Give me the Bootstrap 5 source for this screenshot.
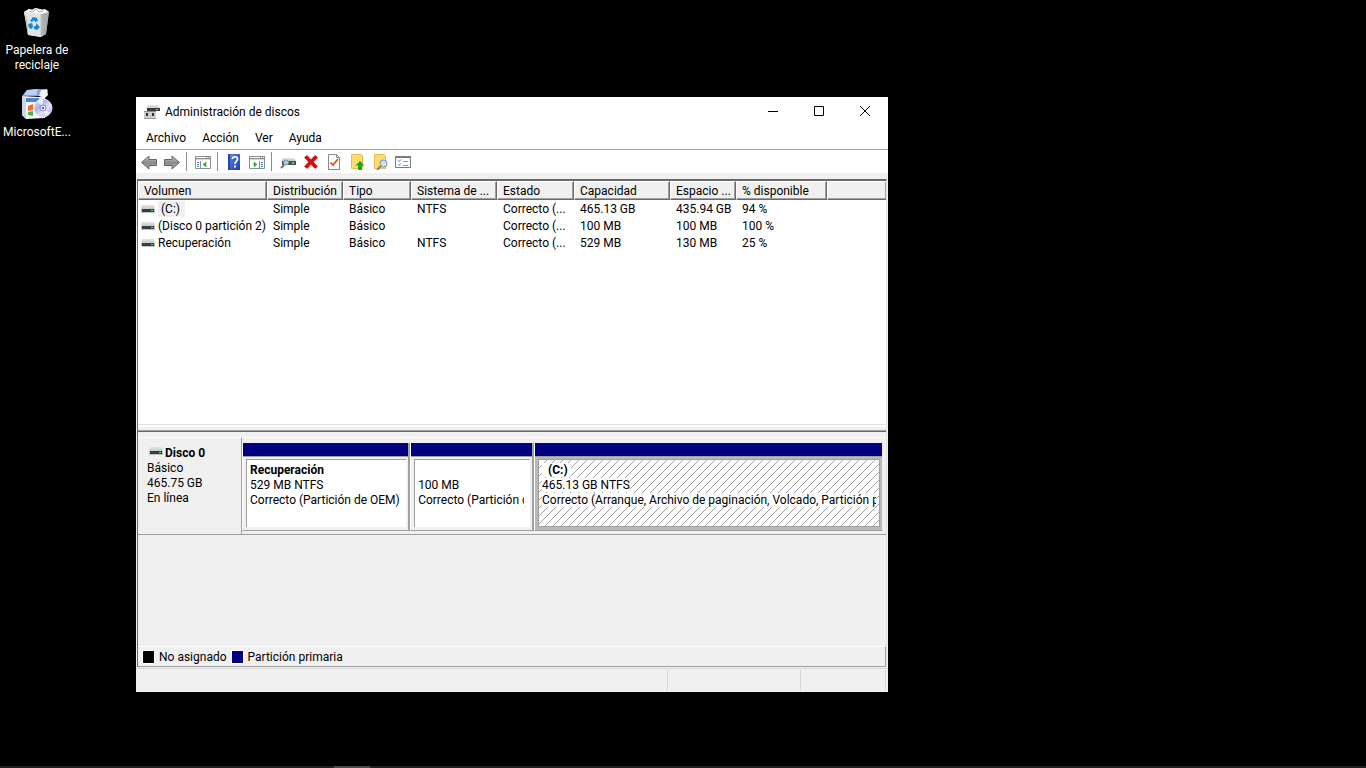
<!DOCTYPE html>
<html lang="es">
<head>
<meta charset="utf-8">
<meta name="viewport" content="width=device-width, initial-scale=1">
<title>Administración de discos</title>
<link href="https://cdn.jsdelivr.net/npm/bootstrap@5.3.0/dist/css/bootstrap.min.css" rel="stylesheet">
<style>
  :root { --face: #f0f0f0; --line: #a0a0a0; --dark: #696969; --navy: #000080; }
  body { background: #000; color: #000; font: 12px/15px Roboto, "Open Sans", sans-serif; }
  .desktop { min-height: 100vh; overflow: hidden; }
  .shortcuts { width: 74px; padding-top: 6px; gap: 15px; }
  .shortcut { color: #fff; line-height: 15px; }
  .shortcut svg { margin-bottom: 5px; }
  .app-window { left: 136px; right: 478px; top: 97px; bottom: 76px; background: var(--face); }
  .title-row { height: 30px; padding-left: 8px; gap: 5px; }
  .win-btn { width: 46px; height: 28px; }
  .plain-btn { border: 0; padding: 0; background: transparent; color: #000; line-height: 0; }
  .menu-row { height: 23px; padding: 1px 2px 0; border-bottom: 1px solid var(--line); }
  .menu-row button { padding: 0 8px; line-height: 15px; }
  .tool-row { height: 23px; padding-left: 1px; }
  .tool-row button { width: 23px; height: 22px; }
  .tool-sep { width: 1px; height: 19px; margin: 0 4px 0 3px; background: #8d8d8d; }
  .panes { margin: 6px 1px 0; border: 1px solid var(--dark); border-width: 2px 1px 0 1px; border-right-color: #e3e3e3; }
  .list-pane { flex: 243 1 0; background: #fff; }
  .vol-table { table-layout: fixed; width: 100%; border-collapse: separate; border-spacing: 0; }
  .vol-table th { height: 19px; padding: 2px 0 0 5px; font-weight: 400; background: var(--face); border: 1px solid #fff; border-right-color: var(--dark); border-bottom-color: var(--dark); box-shadow: inset -1px -1px var(--line); line-height: 15px; }
  .vol-table td { height: 17px; padding: 2px 0 0 6px; line-height: 15px; }
  .vol-table th, .vol-table td { overflow: hidden; white-space: nowrap; }
  .vol-table td:first-child { padding-left: 3px; }
  .vol-table td svg { margin: 0 3px 2px 0; vertical-align: middle; }
  .vol-name.picked { background: var(--face); padding: 1px 5px 1px 3px; }
  .splitter { height: 8px; background: var(--face); border-top: 1px solid #e3e3e3; border-bottom: 1px solid var(--dark); box-shadow: inset 0 -1px var(--line), inset 0 2px #fff; }
  .disk-row { margin-top: 5px; height: 98px; }
  .disk-info { width: 104px; padding: 8px 0 0 9px; border-top: 1px solid #fff; border-right: 1px solid var(--line); border-bottom: 1px solid var(--line); }
  .disk-name { gap: 2px; padding-left: 2px; }
  .disk-name svg { margin-top: 1px; }
  .disk-map { min-width: 0; border-top: 1px solid #fff; border-bottom: 1px solid var(--line); padding: 5px 3px 3px 0; }
  .disk-space { flex: 111 1 0; }
  .part { border-right: 2px solid var(--line); border-left: 1px solid #fff; border-bottom: 1px solid var(--line); min-width: 0; }
  .part-a { flex: 168 1 0; } .part-b { flex: 123 1 0; } .part-c { flex: 353 1 0; }
  .part-bar { height: 13px; background: var(--navy); }
  .part-body { border-top: 1px solid var(--line); padding: 2px 2px 3px 3px; min-height: 0; }
  .part-box { background-color: #fff; border-top: 1px solid var(--line); border-left: 1px solid var(--line); padding: 3px 6px 0 3px; }
  .part-c { border-right: 1px solid var(--face); }
  .part-c .part-body { background: #b8b8b8; }
  .part-c .part-box { border: 1px solid var(--line); background-image: url("data:image/svg+xml,%3Csvg xmlns='http://www.w3.org/2000/svg' width='8' height='8' shape-rendering='crispEdges'%3E%3Cpath fill='%23a0a0a0' d='M7 0h1v1h-1zM6 1h1v1h-1zM5 2h1v1h-1zM4 3h1v1h-1zM3 4h1v1h-1zM2 5h1v1h-1zM1 6h1v1h-1zM0 7h1v1h-1z'/%3E%3C/svg%3E"); padding-right: 3px; }
  .part-line { height: 15px; overflow: hidden; white-space: nowrap; }
  .part-c .part-line span { background: #fff; }
  .part-c .drive-letter { padding: 0 3px 0 6px; }
  .legend-row { height: 21px; padding-left: 5px; gap: 5px; border: 1px solid var(--line); border-top-color: #fff; border-left: 0; }
  .legend-row span { padding-top: 1px; }
  .swatch { width: 11px; height: 12px; outline: 1px solid #fff; }
  .swatch-primary { background: var(--navy); }
  .status-row { height: 24px; margin-top: 1px; border-top: 1px solid #d7d7d7; padding: 1px 2px 1px 0; }
  .status-row div { border-right: 1px solid #d7d7d7; }
  .status-mid { width: 133px; } .status-end { width: 85px; }
  .task-strip { height: 2px; background: #231f20; }
  .task-active { width: 36px; margin-left: 334px; height: 2px; background: #4c4a4a; }
</style>
</head>
<body>
<svg width="0" height="0" class="position-absolute" aria-hidden="true">
  <defs>
    <linearGradient id="lid" x1="0" y1="0" x2="0" y2="1"><stop offset="0" stop-color="#e2e4e6"/><stop offset="1" stop-color="#c6c9cc"/></linearGradient>
    <linearGradient id="bin" x1="0" y1="0" x2="1" y2="0"><stop offset="0" stop-color="#f3f5f6"/><stop offset=".65" stop-color="#d9dde0"/><stop offset="1" stop-color="#a9adb0"/></linearGradient>
    <linearGradient id="arr" x1="0" y1="0" x2="0" y2="1"><stop offset="0" stop-color="#cfcfcf"/><stop offset=".5" stop-color="#8b8b8b"/><stop offset="1" stop-color="#aaa"/></linearGradient>
    <linearGradient id="book" x1="0" y1="0" x2="1" y2="1"><stop offset="0" stop-color="#5d86e0"/><stop offset="1" stop-color="#1d3fae"/></linearGradient>
    <linearGradient id="disc" x1="0" y1="0" x2="1" y2="1"><stop offset="0" stop-color="#eef0ff"/><stop offset=".35" stop-color="#a9b2ec"/><stop offset=".6" stop-color="#e4e2fa"/><stop offset="1" stop-color="#8d98de"/></linearGradient>
    <symbol id="drive" viewBox="0 0 14 8"><path d="M1 0h12l1 4H0z" fill="url(#lid)"/><path d="M0 4h14v4H0z" fill="#c0c3c5"/><path d="M1 4h12v3H1z" fill="#3a3d3f"/><path d="M10 5h2v1h-2z" fill="#3f3"/></symbol>
  </defs>
</svg>
<div class="desktop position-relative d-flex flex-column">
  <nav class="shortcuts d-flex flex-column flex-grow-1" aria-label="Escritorio">
    <a href="#" class="shortcut text-center text-decoration-none d-block">
      <svg class="d-block mx-auto" width="32" height="32" viewBox="0 0 32 32"><path d="M3 6l5-3 3 1 3-2 5 1 4 1 5 2-3 22-5 3-12-2z" fill="url(#bin)"/><path d="M3 6l17 2 8-2-3 22-5 3z" fill="#9fa4a8" opacity=".7"/><path d="M3 6l17 2v23L7 29z" fill="#dfe3e6"/><path d="M3 6l5-3 4 1 3-2 5 2 4-1 4 3-8 2z" fill="#fafbfb"/><path d="M8 5l4 1 3-3 3 3 4-1" fill="none" stroke="#a5aaad"/><path d="M5 10l2 18M20 8v22" stroke="#bcc1c4" fill="none"/><g fill="#1b86d2"><path d="M9 15l3-4 4 1 1 3-3 1-1-2-2 2z"/><path d="M7 18l4-1 1 3-1 3-3-1z"/><path d="M13 23v-3h2v-3l4 4-3 3z"/></g></svg>
      Papelera de reciclaje
    </a>
    <a href="#" class="shortcut text-center text-decoration-none d-block">
      <svg class="d-block mx-auto" width="32" height="32" viewBox="0 0 32 32"><path d="M1 8l5-6 13-1 8 1-3 6z" fill="#7fa6e8"/><path d="M6 2l11-1-2 6H3z" fill="#b9d2f8"/><path d="M20 2l6-1 1 6-3 3-6-2z" fill="#f5f6fa"/><path d="M1 8l17 1 6-1v22l-19 1-4-4z" fill="#f4f7fb"/><path d="M5 10h13v4H5z" fill="#4b86dc"/><path d="M1 8l4 2v21l-4-4z" fill="#cbd5e6"/><path d="M7 18l5-2v6l-5 1z" fill="#f36f27"/><path d="M7 24l5-1v5l-5-1z" fill="#4fb445"/><circle cx="22" cy="20" r="9" fill="url(#disc)" stroke="#dfe2f6"/><path d="M22 20l-6-7 6-2zM22 20l7 5-5 4z" fill="#fff" opacity=".65"/><circle cx="22" cy="20" r="3" fill="#eef" stroke="#7b86ca"/><circle cx="22" cy="20" r="1" fill="#334"/></svg>
      MicrosoftE...
    </a>
  </nav>
  <footer class="task-strip"><div class="task-active"></div></footer>

  <main class="app-window position-absolute d-flex flex-column">
    <header class="bg-white">
      <div class="title-row d-flex align-items-center">
        <svg width="16" height="16" viewBox="0 0 16 16"><path d="M4 1h10l2 4H2z" fill="url(#lid)"/><path d="M3 4h13v3H3z" fill="#3a3d3f"/><path d="M12 5h2v1h-2z" fill="#3f3"/><path d="M0 7h12v8H0z" fill="#c9cccf"/><path d="M0 7h12v1H0z" fill="#8b8e90"/><path d="M2 9h2v3H2zM8 9h2v3H8z" fill="#333"/><path d="M0 14h12v1H0z" fill="#999"/></svg>
        <span class="flex-grow-1">Administración de discos</span>
        <div class="d-flex align-self-start">
          <button class="plain-btn win-btn" aria-label="Minimizar"><svg width="10" height="10"><path d="M0 5.5h10" stroke="#000"/></svg></button>
          <button class="plain-btn win-btn" aria-label="Maximizar"><svg width="10" height="10"><path d="M.5.5h9v9h-9z" fill="none" stroke="#000"/></svg></button>
          <button class="plain-btn win-btn" aria-label="Cerrar"><svg width="10" height="10"><path d="M0 0l10 10M10 0L0 10" stroke="#000"/></svg></button>
        </div>
      </div>
      <nav class="menu-row d-flex align-items-center" aria-label="Menú">
        <button class="plain-btn">Archivo</button><button class="plain-btn">Acción</button><button class="plain-btn">Ver</button><button class="plain-btn">Ayuda</button>
      </nav>
      <div class="tool-row d-flex align-items-center" role="toolbar" aria-label="Herramientas">
        <button class="plain-btn" aria-label="Atrás"><svg width="16" height="16" viewBox="0 0 16 16"><path d="M.5 8.500L8 2v3.500h7.500v6H8V15z" fill="url(#arr)" stroke="#666"/></svg></button>
        <button class="plain-btn" aria-label="Adelante"><svg width="16" height="16" viewBox="0 0 16 16"><path d="M15.500 8.500L8 2v3.500H.5v6H8V15z" fill="url(#arr)" stroke="#666"/></svg></button>
        <span class="tool-sep"></span>
        <button class="plain-btn" aria-label="Mostrar u ocultar árbol"><svg width="16" height="16" viewBox="0 0 16 16"><path d="M.5 2.500h15v12H.5z" fill="#fff" stroke="#8a8f94"/><path d="M0 2h16v4H0z" fill="#8a8f94"/><path d="M1 3h10v1H1zM12 3h1v1h-1zM14 3h1v1h-1z" fill="#fff"/><path d="M1 5h14v1H1z" fill="#d4d7da"/><path d="M5.500 7v8" stroke="#8a8f94"/><path d="M2 8h2v1H2zM2 10h2v1H2zM2 12h2v1H2z" fill="#3d7ec0"/><path d="M8 10.500L11 8v5z" fill="#2daa1c" stroke="#2daa1c" stroke-width=".5"/></svg></button>
        <span class="tool-sep"></span>
        <button class="plain-btn" aria-label="Ayuda"><svg width="16" height="16" viewBox="0 0 16 16"><path d="M2 0h12v16H2z" fill="url(#book)"/><path d="M2 0h2v16H2z" fill="#2546a6"/><path d="M6.500 5c0-3 5-3 5 0 0 2-2.500 2.200-2.500 5" fill="none" stroke="#fff" stroke-width="1.700"/><path d="M8 11.500h2v2H8z" fill="#fff"/></svg></button>
        <button class="plain-btn" aria-label="Panel de acciones"><svg width="16" height="16" viewBox="0 0 16 16"><path d="M.5 2.500h15v12H.5z" fill="#fff" stroke="#8a8f94"/><path d="M0 2h16v4H0z" fill="#8a8f94"/><path d="M1 3h10v1H1zM12 3h1v1h-1zM14 3h1v1h-1z" fill="#fff"/><path d="M1 5h14v1H1z" fill="#d4d7da"/><path d="M10.500 7v8" stroke="#8a8f94"/><path d="M12 8h2v1h-2zM12 10h2v1h-2zM12 12h2v1h-2z" fill="#3d7ec0"/><path d="M8 10.500L5 8v5z" fill="#2daa1c" stroke="#2daa1c" stroke-width=".5"/></svg></button>
        <span class="tool-sep"></span>
        <button class="plain-btn" aria-label="Volver a examinar discos"><svg width="16" height="16" viewBox="0 0 16 16"><path d="M3 4h11l2 3H1z" fill="url(#lid)"/><path d="M2 7h14v4H2z" fill="#4a4e51"/><path d="M12 8h2v2h-2z" fill="#3e3"/><circle cx="6" cy="8.500" r="2.500" fill="#a9cbe6" stroke="#7794a8"/><path d="M4 11l-3 3" stroke="#67747c" stroke-width="2"/></svg></button>
        <button class="plain-btn" aria-label="Eliminar"><svg width="16" height="16" viewBox="0 0 16 16"><path d="M1.500 3.500l2.500-2 4 4.200 4-4.200 2.500 2L10.300 8l4.200 4.500-2.500 2-4-4.200-4 4.200-2.500-2L5.700 8z" fill="#dc0a0a" stroke="#a60000" stroke-width=".6"/></svg></button>
        <button class="plain-btn" aria-label="Propiedades"><svg width="16" height="16" viewBox="0 0 16 16"><path d="M2.500.5h8l3 3v12h-11z" fill="#fafafa" stroke="#898989"/><path d="M10.500.5v3h3" fill="none" stroke="#898989"/><path d="M4.500 8.500L7 11l5-6" fill="none" stroke="#e54a19" stroke-width="1.700"/></svg></button>
        <button class="plain-btn" aria-label="Subir"><svg width="16" height="16" viewBox="0 0 16 16"><path d="M2.500.5h10l1 1v13h-11z" fill="#fbdc72" stroke="#e6bf4b"/><path d="M11 7l4.500 4.500H13V16H9v-4.500H6.500z" fill="#23a51a"/></svg></button>
        <button class="plain-btn" aria-label="Explorar"><svg width="16" height="16" viewBox="0 0 16 16"><path d="M2.500.5h10l1 1v13h-11z" fill="#fbdc72" stroke="#e6bf4b"/><path d="M9 12l-4 4" stroke="#78848c" stroke-width="2"/><circle cx="11.500" cy="9.500" r="3.500" fill="#c5e2f6" stroke="#7593aa"/></svg></button>
        <button class="plain-btn" aria-label="Vista de lista"><svg width="16" height="16" viewBox="0 0 16 16"><path d="M.5 2.500h15v11H.5z" fill="#fff" stroke="#777c80"/><path d="M0 2h16v2H0z" fill="#777c80"/><path d="M3 6.500l1 1 2-2M3 10.500l1 1 2-2" fill="none" stroke="#2d7ed1"/><path d="M8 7h5v1H8zM8 11h5v1H8z" fill="#999"/></svg></button>
      </div>
    </header>

    <div class="panes d-flex flex-column flex-grow-1">
      <section class="list-pane">
        <table class="vol-table">
          <colgroup><col style="width:129px"><col style="width:76px"><col style="width:68px"><col style="width:86px"><col style="width:77px"><col style="width:96px"><col style="width:66px"><col style="width:91px"><col></colgroup>
          <thead><tr><th>Volumen</th><th>Distribución</th><th>Tipo</th><th>Sistema de ...</th><th>Estado</th><th>Capacidad</th><th>Espacio ...</th><th>% disponible</th><th class="border-end-0"></th></tr></thead>
          <tbody>
            <tr><td><svg width="14" height="8"><use href="#drive"/></svg><span class="vol-name picked">(C:)</span></td><td>Simple</td><td>Básico</td><td>NTFS</td><td>Correcto (...</td><td>465.13 GB</td><td>435.94 GB</td><td>94 %</td><td></td></tr>
            <tr><td><svg width="14" height="8"><use href="#drive"/></svg><span class="vol-name">(Disco 0 partición 2)</span></td><td>Simple</td><td>Básico</td><td></td><td>Correcto (...</td><td>100 MB</td><td>100 MB</td><td>100 %</td><td></td></tr>
            <tr><td><svg width="14" height="8"><use href="#drive"/></svg><span class="vol-name">Recuperación</span></td><td>Simple</td><td>Básico</td><td>NTFS</td><td>Correcto (...</td><td>529 MB</td><td>130 MB</td><td>25 %</td><td></td></tr>
          </tbody>
        </table>
      </section>
      <div class="splitter"></div>
      <section class="disk-row d-flex">
        <div class="disk-info flex-shrink-0">
          <div class="disk-name fw-bold d-flex"><svg width="14" height="8"><use href="#drive"/></svg>Disco 0</div>
          <div>Básico</div><div>465.75 GB</div><div>En línea</div>
        </div>
        <div class="disk-map d-flex flex-grow-1">
          <div class="part part-a d-flex flex-column"><div class="part-bar"></div><div class="part-body d-flex flex-grow-1"><div class="part-box w-100">
            <div class="part-line fw-bold">Recuperación</div><div class="part-line">529 MB NTFS</div><div class="part-line">Correcto (Partición de OEM)</div></div></div></div>
          <div class="part part-b d-flex flex-column"><div class="part-bar"></div><div class="part-body d-flex flex-grow-1"><div class="part-box w-100 overflow-hidden">
            <div class="part-line"></div><div class="part-line">100 MB</div><div class="part-line">Correcto (Partición d</div></div></div></div>
          <div class="part part-c d-flex flex-column"><div class="part-bar"></div><div class="part-body d-flex flex-grow-1"><div class="part-box w-100 overflow-hidden">
            <div class="part-line fw-bold"><span class="drive-letter">(C:)</span></div><div class="part-line"><span>465.13 GB NTFS</span></div><div class="part-line"><span>Correcto (Arranque, Archivo de paginación, Volcado, Partición p</span></div></div></div></div>
        </div>
      </section>
      <div class="disk-space"></div>
      <div class="legend-row d-flex align-items-center"><i class="swatch bg-black"></i><span>No asignado</span><i class="swatch swatch-primary"></i><span>Partición primaria</span></div>
    </div>
    <footer class="status-row d-flex"><div class="flex-grow-1"></div><div class="status-mid"></div><div class="status-end"></div></footer>
  </main>
</div>
<script src="https://cdn.jsdelivr.net/npm/bootstrap@5.3.0/dist/js/bootstrap.bundle.min.js"></script>
</body>
</html>
